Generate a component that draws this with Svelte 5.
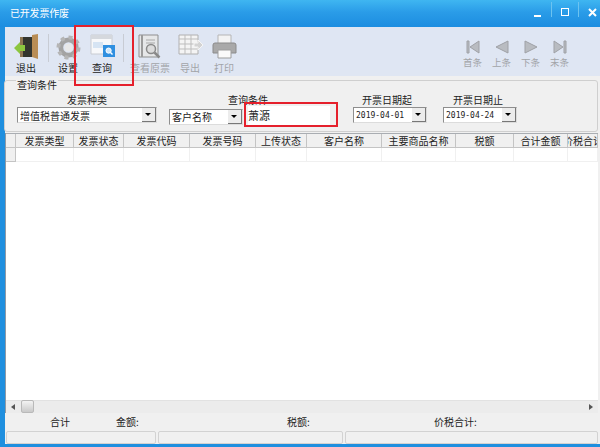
<script lang="ts">
    const columns = [
        { title: "发票类型", width: 58 },
        { title: "发票状态", width: 50 },
        { title: "发票代码", width: 66 },
        { title: "发票号码", width: 66 },
        { title: "上传状态", width: 51 },
        { title: "客户名称", width: 75 },
        { title: "主要商品名称", width: 74 },
        { title: "税额", width: 58 },
        { title: "合计金额", width: 54 },
        { title: "价税合计", width: 30 }
    ];
    const gridTemplate = "10px " + columns.map((c) => c.width + "px").join(" ");
    const navButtons = [
        { label: "首条", shape: "first" },
        { label: "上条", shape: "prev" },
        { label: "下条", shape: "next" },
        { label: "末条", shape: "last" }
    ];
</script>

<div class="window">
    <div class="titlebar">
        <span class="title">已开发票作废</span>
        <div class="winbtns">
            <span class="min"></span>
            <i></i>
            <span class="max"></span>
            <i></i>
            <svg width="9" height="9" viewBox="0 0 9 9"><path d="M1 1l7 7M8 1L1 8" stroke="#fff" stroke-width="2" /></svg>
        </div>
    </div>

    <div class="body">
        <div class="toolbar">
            <button class="tool w38">
                <svg width="27" height="27" viewBox="0 0 27 27">
                    <path d="M9 3h11v20H9z" fill="#33352f" />
                    <path d="M19 1l6-1v25l-6-2z" fill="#b98d55" />
                    <path d="M7 3h3v20H7z" fill="#8d7653" />
                    <path d="M1 14l6-6v3h5v6H7v3z" fill="#8cc63f" />
                </svg>
                <span>退出</span>
            </button>
            <div class="sep"></div>
            <button class="tool w32">
                <svg width="25" height="27" viewBox="0 0 26 26">
                    <circle cx="13" cy="13" r="8" fill="none" stroke="#a3a3a3" stroke-width="5" />
                    <circle cx="13" cy="13" r="10.5" fill="none" stroke="#b5b5b5" stroke-width="4" stroke-dasharray="4 4.2" />
                    <circle cx="13" cy="13" r="4" fill="#e8e8e8" />
                </svg>
                <span>设置</span>
            </button>
            <button class="tool w36">
                <svg width="25" height="27" viewBox="0 0 25 27">
                    <path d="M1 1h21v19H1z" fill="#f7f8fa" stroke="#c9ccd2" />
                    <path d="M1 1h21v4H1z" fill="#d5d8dd" />
                    <path d="M3 8h10v6H3z" fill="#d6e4f3" />
                    <path d="M13 11h12v12H13z" fill="#2f8fe0" />
                    <circle cx="18.6" cy="16.6" r="2.6" fill="#cfe6fa" stroke="#fff" />
                    <path d="M20.5 18.5l2 2" stroke="#fff" stroke-width="1.4" />
                </svg>
                <span>查询</span>
            </button>
            <div class="sep"></div>
            <button class="tool off w46">
                <svg width="24" height="27" viewBox="0 0 24 27">
                    <path d="M1 1h19v22H1z" fill="#e6e7e8" stroke="#8f8f8f" />
                    <path d="M4 1v22" stroke="#9b9b9b" stroke-width="2" />
                    <path d="M8 6h9M8 9h9" stroke="#a8a8a8" />
                    <circle cx="13" cy="15" r="4.5" fill="#dcdcdc" stroke="#8a8a8a" stroke-width="1.5" />
                    <path d="M16.5 18.5l5 5" stroke="#8a8a8a" stroke-width="2.5" />
                </svg>
                <span>查看原票</span>
            </button>
            <button class="tool off w34">
                <svg width="25" height="27" viewBox="0 0 25 27">
                    <path d="M1 1h19v19H1z" fill="#f4f4f4" stroke="#b0b0b0" />
                    <path d="M1 5h19M1 10h19M1 15h19M7 1v19M13 1v19" stroke="#bdbdbd" />
                    <path d="M16 9h4V6l5 5-5 5v-3h-4z" fill="#d3d3d3" stroke="#f5f5f5" />
                </svg>
                <span>导出</span>
            </button>
            <button class="tool off w34">
                <svg width="25" height="27" viewBox="0 0 25 27">
                    <path d="M6 1h13v9H6z" fill="#f3f3f3" stroke="#b5b5b5" />
                    <path d="M1 11q0-2 2-2h19q2 0 2 2v8H1z" fill="#a9a9a9" stroke="#8b8b8b" />
                    <path d="M6 16h13v8H6z" fill="#fafafa" stroke="#9d9d9d" />
                </svg>
                <span>打印</span>
            </button>
            <div class="spacer"></div>
            {#each navButtons as nav}
                <button class="nav">
                    <svg width="14" height="14" viewBox="0 0 14 14">
                        {#if nav.shape === "first"}
                            <path d="M1 1h2v12H1zM13 1v12L4 7z" fill="#b9bcc1" stroke="#9fa1a6" />
                        {:else if nav.shape === "prev"}
                            <path d="M13 1v12L1 7z" fill="#b9bcc1" stroke="#9fa1a6" />
                        {:else if nav.shape === "next"}
                            <path d="M1 1v12l12-6z" fill="#b9bcc1" stroke="#9fa1a6" />
                        {:else}
                            <path d="M13 1h-2v12h2zM1 1v12l9-6z" fill="#b9bcc1" stroke="#9fa1a6" />
                        {/if}
                    </svg>
                    <span>{nav.label}</span>
                </button>
            {/each}
        </div>

        <fieldset class="query">
            <legend>查询条件</legend>
            <div class="field f1">
                <label>发票种类</label>
                <div class="select"><span>增值税普通发票</span><b></b></div>
            </div>
            <div class="field f2">
                <label>查询条件</label>
                <div class="pair">
                    <div class="select s2"><span>客户名称</span><b></b></div>
                    <div class="input">萧源</div>
                </div>
            </div>
            <div class="field f3">
                <label>开票日期起</label>
                <div class="select date"><span>2019-04-01</span><b></b></div>
            </div>
            <div class="field f4">
                <label>开票日期止</label>
                <div class="select date"><span>2019-04-24</span><b></b></div>
            </div>
        </fieldset>

        <div class="table">
            <div class="head" style="grid-template-columns: {gridTemplate}">
                <div class="corner"></div>
                {#each columns as col}
                    <div class="th">{col.title}</div>
                {/each}
            </div>
            <div class="row" style="grid-template-columns: {gridTemplate}">
                <div class="rowhead"></div>
                {#each columns as col}
                    <div class="td"></div>
                {/each}
            </div>
            <div class="rest"></div>
            <div class="hscroll">
                <span class="arrow left"></span>
                <span class="thumb"></span>
                <span class="arrow right"></span>
            </div>
        </div>

        <div class="totals">
            <span class="t1">合计</span>
            <span class="t2">金额:</span>
            <span class="t3">税额:</span>
            <span class="t4">价税合计:</span>
        </div>
        <div class="boxes">
            <div class="box b1"></div>
            <div class="box b2"></div>
            <div class="box b3"></div>
        </div>
    </div>

    <div class="mark mark1"></div>
    <div class="mark mark2"></div>
</div>

<style>
    :global(body) {
        margin: 0;
    }
    .window {
        position: relative;
        width: 600px;
        height: 447px;
        overflow: hidden;
        display: flex;
        flex-direction: column;
        background: #1f8fdf;
        font-family: "Noto Sans CJK SC", "Liberation Sans", sans-serif;
        font-size: 10px;
        color: #222;
    }
    .titlebar {
        height: 27px;
        flex: none;
        display: flex;
        align-items: center;
        justify-content: space-between;
        padding: 0 3px 3px 10px;
        box-sizing: border-box;
        background: linear-gradient(#3fb6f1, #2a9ce8 45%, #1c8de0);
        color: #fff;
    }
    .title {
        letter-spacing: -0.2px;
    }
    .winbtns {
        display: flex;
        align-items: center;
        gap: 9px;
    }
    .winbtns i {
        width: 1px;
        height: 15px;
        margin-top: -6px;
        background: #6cc3f0;
    }
    .min {
        width: 7px;
        height: 2px;
        margin: 8px 1px 0 0;
        background: #fff;
    }
    .max {
        width: 6px;
        height: 6px;
        border: 1px solid #fff;
    }
    .body {
        flex: 1;
        min-height: 0;
        margin: 0 0 3px 5px;
        display: flex;
        flex-direction: column;
        background: #f0f0f0;
    }
    .toolbar {
        height: 49px;
        flex: none;
        display: flex;
        align-items: flex-start;
        padding: 7px 0 0 2px;
        box-sizing: border-box;
        background: #dfe6f3;
    }
    .tool,
    .nav {
        border: 0;
        padding: 0;
        background: none;
        font: inherit;
        color: inherit;
        display: flex;
        flex-direction: column;
        align-items: center;
    }
    .tool span {
        line-height: 14px;
    }
    .w32 {
        width: 32px;
    }
    .w34 {
        width: 34px;
    }
    .w36 {
        width: 36px;
    }
    .w38 {
        width: 38px;
    }
    .w46 {
        width: 46px;
    }
    .off span,
    .nav span {
        color: #a2a4a8;
    }
    .sep {
        width: 1px;
        height: 28px;
        margin: 0 3px;
        background: #c8ccd4;
    }
    .spacer {
        flex: 1;
    }
    .nav {
        width: 29px;
        padding-top: 6px;
    }
    .nav span {
        line-height: 14px;
        font-size: 9.5px;
    }
    .nav svg {
        margin-bottom: 1px;
    }
    .toolbar .nav:last-child {
        margin-right: 26px;
    }
    .query {
        position: relative;
        height: 52px;
        flex: none;
        display: flex;
        margin: 4px 2px 0 -1px;
        padding: 0 0 0 12px;
        box-sizing: border-box;
        border: 1px solid #cfcfcf;
        border-radius: 3px;
        min-width: 0;
    }
    .query legend {
        position: absolute;
        top: -3px;
        left: 11px;
        line-height: 13px;
        background: #f0f0f0;
        padding: 0 1px;
    }
    .field {
        display: flex;
        flex-direction: column;
        padding-top: 12px;
    }
    .field label {
        text-align: center;
        line-height: 13px;
    }
    .f1 {
        width: 140px;
    }
    .f2 {
        width: 161px;
        margin-left: 12px;
    }
    .f2 label {
        padding-right: 3px;
    }
    .f3 {
        width: 74px;
        margin-left: 23px;
    }
    .f3 label {
        padding-right: 6px;
    }
    .f4 {
        width: 74px;
        margin-left: 16px;
    }
    .f4 label {
        padding-right: 4px;
    }
    .pair {
        display: flex;
        align-items: center;
        gap: 5px;
    }
    .select {
        height: 16px;
        margin-top: 1px;
        display: flex;
        align-items: center;
        justify-content: space-between;
        box-sizing: border-box;
        border: 1px solid #8e8e8e;
        border-right-color: #dcdcdc;
        border-bottom-color: #dcdcdc;
        background: #fff;
        padding-left: 2px;
        line-height: 13px;
        white-space: nowrap;
    }
    .s2 {
        width: 74px;
        flex: none;
    }
    .select b {
        position: relative;
        width: 14px;
        height: 14px;
        flex: none;
        background: #ececec;
        border-right: 1px solid #777;
        border-bottom: 1px solid #777;
        box-sizing: border-box;
    }
    .select b::after {
        content: "";
        position: absolute;
        left: 3px;
        top: 5px;
        border: 3px solid transparent;
        border-top: 3px solid #000;
        border-bottom: 0;
    }
    .date {
        font-family: "DejaVu Sans Mono", "Liberation Mono", monospace;
        font-size: 8px;
    }
    .input {
        flex: 1;
        height: 20px;
        line-height: 18px;
        box-sizing: border-box;
        background: #fff;
        font-size: 11px;
    }
    .table {
        flex: 1;
        min-height: 0;
        display: flex;
        flex-direction: column;
        margin: 1px 2px 0 0;
        background: #fff;
        border-left: 1px solid #8f9aa6;
        overflow: hidden;
    }
    .head,
    .row {
        display: grid;
        flex: none;
    }
    .head {
        height: 15px;
        background: #f0f0f0;
        border-top: 1px solid #a9adb2;
        box-sizing: border-box;
    }
    .corner,
    .th {
        border-right: 1px solid #c4c4c4;
        border-bottom: 1px solid #c4c4c4;
        text-align: center;
        line-height: 13px;
        white-space: nowrap;
        overflow: hidden;
    }
    .th:last-child {
        text-align: left;
        text-indent: -5px;
    }
    .row {
        height: 14px;
        background: #fff;
    }
    .rowhead {
        background: #f0f0f0;
        border-right: 1px solid #c4c4c4;
        border-bottom: 1px solid #c4c4c4;
    }
    .td {
        border-right: 1px solid #f0f0f0;
        border-bottom: 1px solid #f0f0f0;
    }
    .rest {
        flex: 1;
    }
    .hscroll {
        height: 13px;
        flex: none;
        display: flex;
        align-items: center;
        justify-content: space-between;
        background: #ececec;
        border-top: 1px solid #e2e2e2;
        box-sizing: border-box;
        padding: 0 5px;
    }
    .thumb {
        position: absolute;
        left: 21px;
        top: 400px;
        width: 13px;
        height: 13px;
        border-radius: 2px;
        border: 1px solid #b9b9b9;
        box-sizing: border-box;
        background: linear-gradient(#f3f3f3, #c9c9c9);
    }
    .arrow {
        border: 3px solid transparent;
    }
    .arrow.left {
        border-right: 4px solid #555;
        border-left: 0;
    }
    .arrow.right {
        border-left: 4px solid #555;
        border-right: 0;
    }
    .totals {
        height: 18px;
        flex: none;
        position: relative;
        line-height: 17px;
    }
    .totals span {
        position: absolute;
        top: 0;
    }
    .t1 {
        left: 45px;
    }
    .t2 {
        left: 111px;
    }
    .t3 {
        left: 282px;
    }
    .t4 {
        left: 429px;
    }
    .boxes {
        flex: none;
        display: flex;
        gap: 2px;
        padding: 0 2px 0 1px;
        height: 13px;
    }
    .box {
        box-sizing: border-box;
        border: 1px solid #d2d2d2;
        border-radius: 2px;
    }
    .b1 {
        width: 150px;
    }
    .b2 {
        width: 185px;
    }
    .b3 {
        flex: 1;
    }
    .mark {
        position: absolute;
        border: 2px solid #e5202c;
        box-sizing: border-box;
    }
    .mark1 {
        left: 74px;
        top: 25px;
        width: 60px;
        height: 61px;
    }
    .mark2 {
        left: 244px;
        top: 102px;
        width: 94px;
        height: 25px;
    }
</style>
